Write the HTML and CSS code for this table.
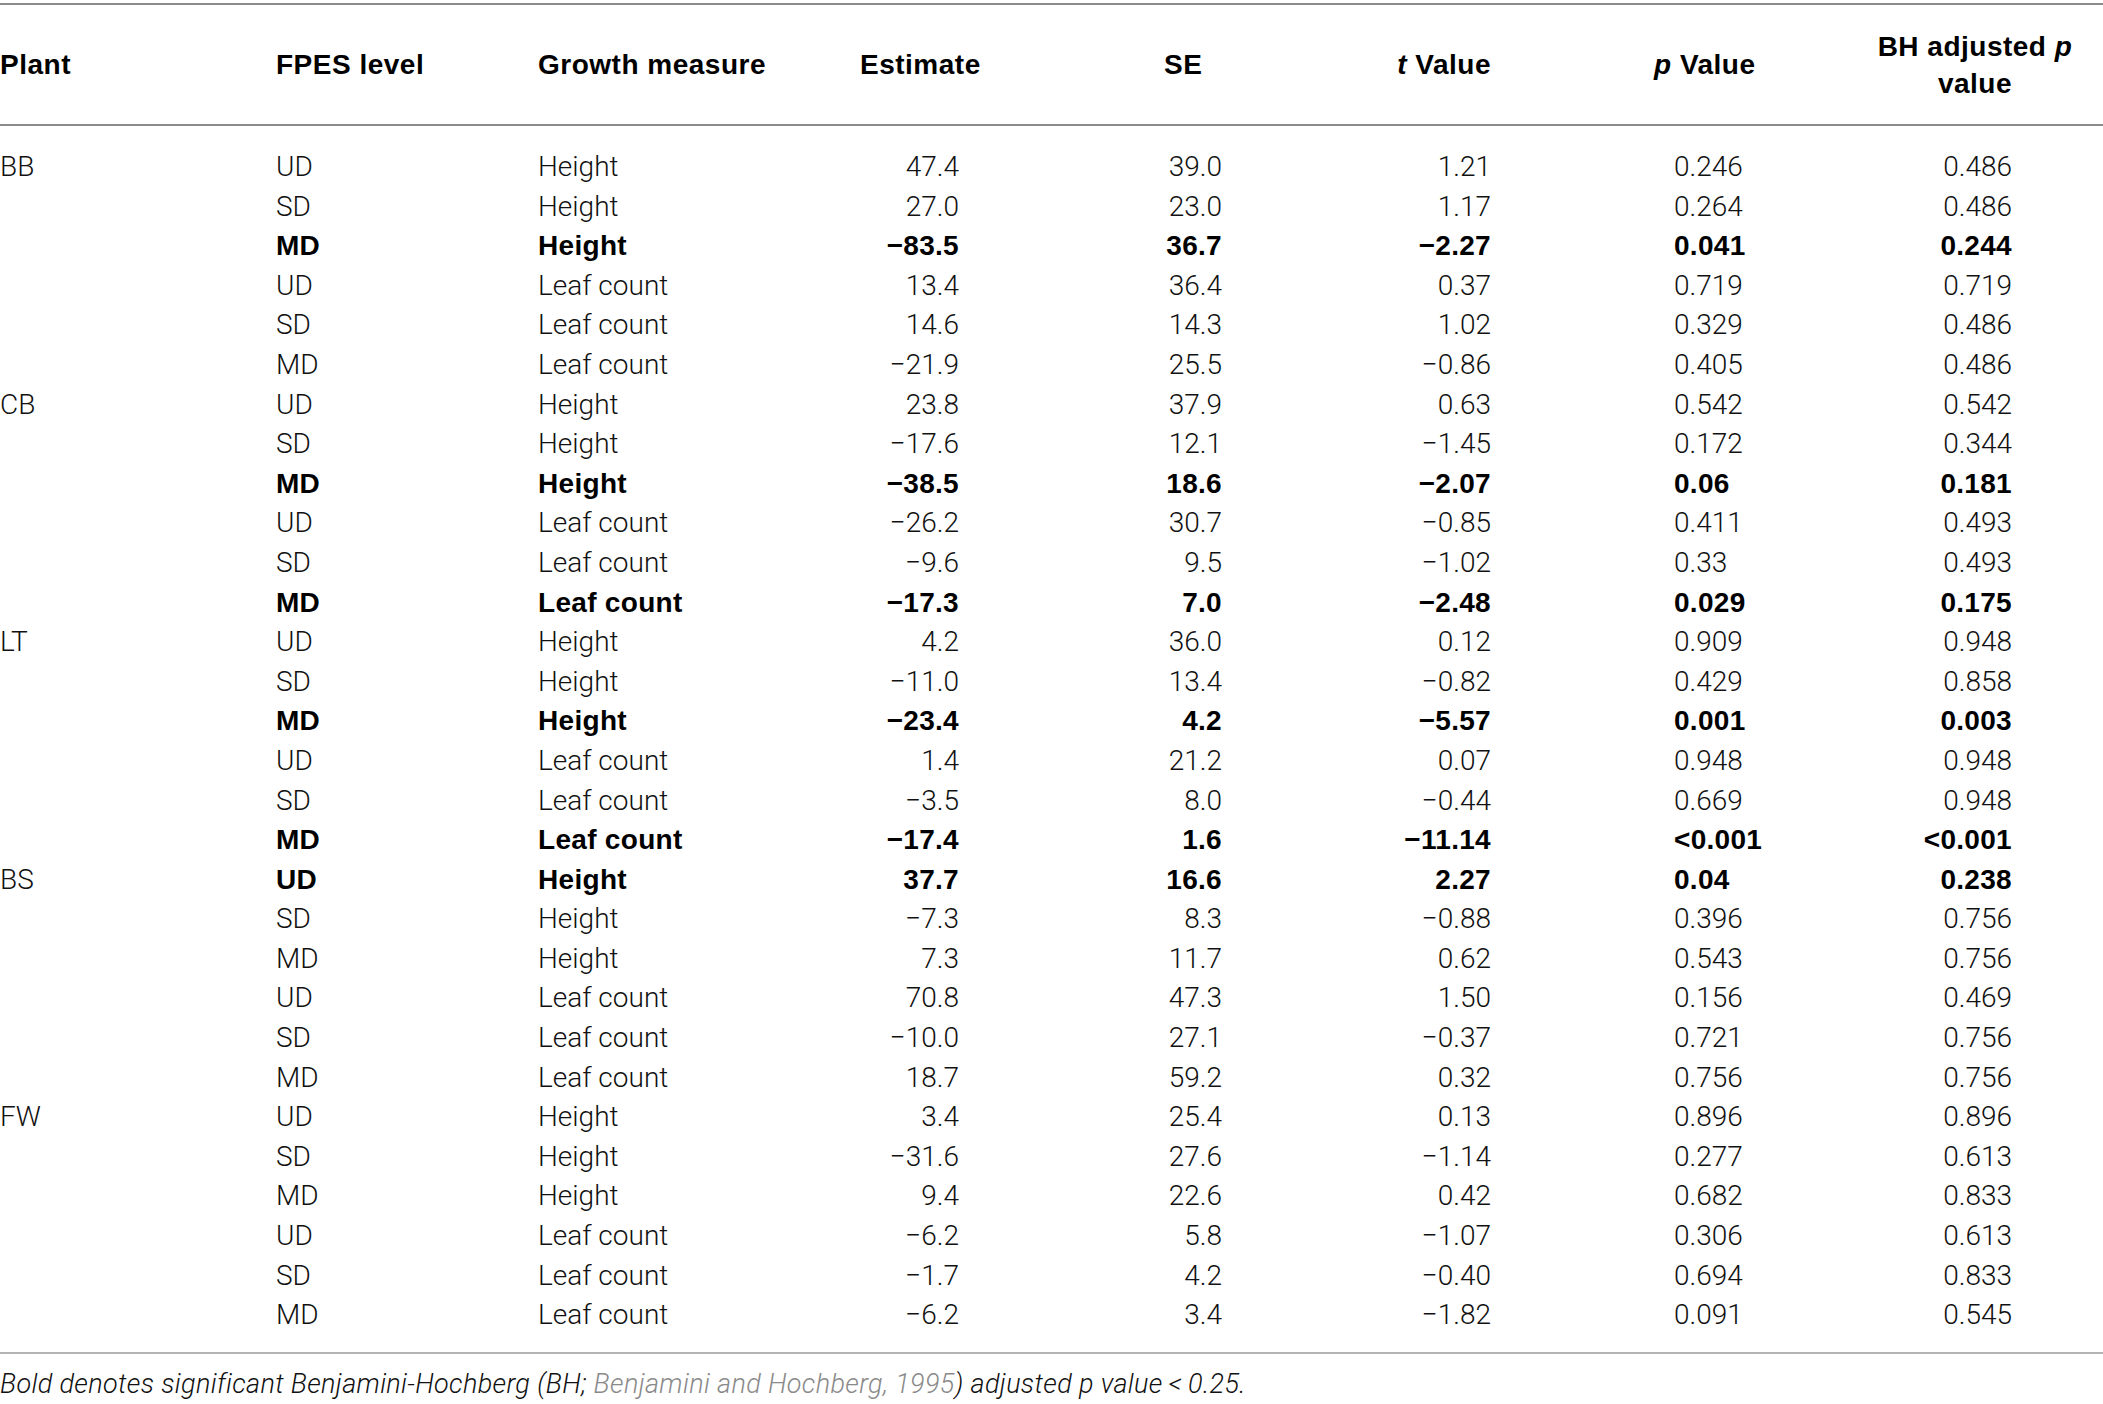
FILE: index.html
```html
<!DOCTYPE html>
<html lang="en">
<head>
<meta charset="utf-8">
<title>Growth measures table</title>
<link rel="stylesheet" href="styles.css">
</head>
<body>
<table class="data">
  <colgroup>
    <col class="w-plant"><col class="w-fpes"><col class="w-growth"><col class="w-est"><col class="w-se"><col class="w-t"><col class="w-p"><col class="w-bh">
  </colgroup>
  <thead>
    <tr>
      <th>Plant</th>
      <th>FPES level</th>
      <th>Growth measure</th>
      <th>Estimate</th>
      <th>SE</th>
      <th><i>t</i> Value</th>
      <th><i>p</i> Value</th>
      <th>BH adjusted <i>p</i><br>value</th>
    </tr>
  </thead>
  <tbody>
    <tr class="first"><td>BB</td><td>UD</td><td>Height</td><td>47.4</td><td>39.0</td><td>1.21</td><td>0.246</td><td>0.486</td></tr>
    <tr><td></td><td>SD</td><td>Height</td><td>27.0</td><td>23.0</td><td>1.17</td><td>0.264</td><td>0.486</td></tr>
    <tr class="sig"><td></td><td>MD</td><td>Height</td><td>−83.5</td><td>36.7</td><td>−2.27</td><td>0.041</td><td>0.244</td></tr>
    <tr><td></td><td>UD</td><td>Leaf count</td><td>13.4</td><td>36.4</td><td>0.37</td><td>0.719</td><td>0.719</td></tr>
    <tr><td></td><td>SD</td><td>Leaf count</td><td>14.6</td><td>14.3</td><td>1.02</td><td>0.329</td><td>0.486</td></tr>
    <tr><td></td><td>MD</td><td>Leaf count</td><td>−21.9</td><td>25.5</td><td>−0.86</td><td>0.405</td><td>0.486</td></tr>
    <tr><td>CB</td><td>UD</td><td>Height</td><td>23.8</td><td>37.9</td><td>0.63</td><td>0.542</td><td>0.542</td></tr>
    <tr><td></td><td>SD</td><td>Height</td><td>−17.6</td><td>12.1</td><td>−1.45</td><td>0.172</td><td>0.344</td></tr>
    <tr class="sig"><td></td><td>MD</td><td>Height</td><td>−38.5</td><td>18.6</td><td>−2.07</td><td>0.06</td><td>0.181</td></tr>
    <tr><td></td><td>UD</td><td>Leaf count</td><td>−26.2</td><td>30.7</td><td>−0.85</td><td>0.411</td><td>0.493</td></tr>
    <tr><td></td><td>SD</td><td>Leaf count</td><td>−9.6</td><td>9.5</td><td>−1.02</td><td>0.33</td><td>0.493</td></tr>
    <tr class="sig"><td></td><td>MD</td><td>Leaf count</td><td>−17.3</td><td>7.0</td><td>−2.48</td><td>0.029</td><td>0.175</td></tr>
    <tr><td>LT</td><td>UD</td><td>Height</td><td>4.2</td><td>36.0</td><td>0.12</td><td>0.909</td><td>0.948</td></tr>
    <tr><td></td><td>SD</td><td>Height</td><td>−11.0</td><td>13.4</td><td>−0.82</td><td>0.429</td><td>0.858</td></tr>
    <tr class="sig"><td></td><td>MD</td><td>Height</td><td>−23.4</td><td>4.2</td><td>−5.57</td><td>0.001</td><td>0.003</td></tr>
    <tr><td></td><td>UD</td><td>Leaf count</td><td>1.4</td><td>21.2</td><td>0.07</td><td>0.948</td><td>0.948</td></tr>
    <tr><td></td><td>SD</td><td>Leaf count</td><td>−3.5</td><td>8.0</td><td>−0.44</td><td>0.669</td><td>0.948</td></tr>
    <tr class="sig"><td></td><td>MD</td><td>Leaf count</td><td>−17.4</td><td>1.6</td><td>−11.14</td><td>&lt;0.001</td><td>&lt;0.001</td></tr>
    <tr class="sig"><td>BS</td><td>UD</td><td>Height</td><td>37.7</td><td>16.6</td><td>2.27</td><td>0.04</td><td>0.238</td></tr>
    <tr><td></td><td>SD</td><td>Height</td><td>−7.3</td><td>8.3</td><td>−0.88</td><td>0.396</td><td>0.756</td></tr>
    <tr><td></td><td>MD</td><td>Height</td><td>7.3</td><td>11.7</td><td>0.62</td><td>0.543</td><td>0.756</td></tr>
    <tr><td></td><td>UD</td><td>Leaf count</td><td>70.8</td><td>47.3</td><td>1.50</td><td>0.156</td><td>0.469</td></tr>
    <tr><td></td><td>SD</td><td>Leaf count</td><td>−10.0</td><td>27.1</td><td>−0.37</td><td>0.721</td><td>0.756</td></tr>
    <tr><td></td><td>MD</td><td>Leaf count</td><td>18.7</td><td>59.2</td><td>0.32</td><td>0.756</td><td>0.756</td></tr>
    <tr><td>FW</td><td>UD</td><td>Height</td><td>3.4</td><td>25.4</td><td>0.13</td><td>0.896</td><td>0.896</td></tr>
    <tr><td></td><td>SD</td><td>Height</td><td>−31.6</td><td>27.6</td><td>−1.14</td><td>0.277</td><td>0.613</td></tr>
    <tr><td></td><td>MD</td><td>Height</td><td>9.4</td><td>22.6</td><td>0.42</td><td>0.682</td><td>0.833</td></tr>
    <tr><td></td><td>UD</td><td>Leaf count</td><td>−6.2</td><td>5.8</td><td>−1.07</td><td>0.306</td><td>0.613</td></tr>
    <tr><td></td><td>SD</td><td>Leaf count</td><td>−1.7</td><td>4.2</td><td>−0.40</td><td>0.694</td><td>0.833</td></tr>
    <tr class="last"><td></td><td>MD</td><td>Leaf count</td><td>−6.2</td><td>3.4</td><td>−1.82</td><td>0.091</td><td>0.545</td></tr>
  </tbody>
</table>
<p class="note">Bold denotes significant Benjamini-Hochberg (BH; <span class="ref">Benjamini and Hochberg, 1995</span>) adjusted p value&#8201;&lt;&#8201;0.25.</p>
</body>
</html>
```
FILE: styles.css
```css
html, body {
  margin: 0;
  padding: 0;
  background: #ffffff;
}

body {
  font-family: Roboto, "Liberation Sans", Arial, sans-serif;
  font-weight: 300;
  color: #111111;
}

.data {
  width: 2103px;
  table-layout: fixed;
  border-collapse: collapse;
  margin-top: 3px;
  border-top: 2px solid #8c8c8c;
}

.w-plant { width: 276px; }
.w-fpes { width: 262px; }
.w-growth { width: 282px; }
.w-est { width: 180px; }
.w-se { width: 260px; }
.w-t { width: 260px; }
.w-p { width: 300px; }
.w-bh { width: 283px; }

.data th {
  font-family: "Liberation Sans", Arial, sans-serif;
  font-weight: 700;
  font-size: 28px;
  letter-spacing: 0.5px;
  line-height: 37px;
  color: #000000;
  height: 119px;
  padding: 0;
  text-align: left;
  vertical-align: middle;
  border-bottom: 2px solid #8c8c8c;
}

.data th:nth-child(4) { padding-left: 40px; }
.data th:nth-child(5) { padding-left: 164px; }
.data th:nth-child(6) { text-align: right; padding-right: 29px; }
.data th:nth-child(7) { padding-left: 134px; }
.data th:nth-child(8) { text-align: center; padding-left: 27px; }

.data td {
  font-size: 28px;
  line-height: 39.6px;
  height: 39.6px;
  padding: 0;
  white-space: nowrap;
  vertical-align: middle;
  text-align: left;
}

.data td:nth-child(4) { text-align: right; padding-right: 41px; }
.data td:nth-child(5) { text-align: right; padding-right: 38px; }
.data td:nth-child(6) { text-align: right; padding-right: 29px; }
.data td:nth-child(7) { text-align: left; padding-left: 154px; }
.data td:nth-child(8) { text-align: right; padding-right: 91px; }

.data tr.first td { padding-top: 21px; }
.data tr.last td { padding-bottom: 17px; }

.data tbody {
  border-bottom: 2px solid #b4b4b4;
}

.data tr.sig td + td {
  font-family: "Liberation Sans", Arial, sans-serif;
  font-weight: 700;
  letter-spacing: 0.3px;
  color: #000000;
}

.note {
  margin: 0;
  padding-top: 13px;
  font-size: 27px;
  letter-spacing: 0.35px;
  line-height: 34px;
  font-style: italic;
  font-weight: 300;
  color: #111111;
}

.note .ref {
  color: #8a8a8a;
}
```
